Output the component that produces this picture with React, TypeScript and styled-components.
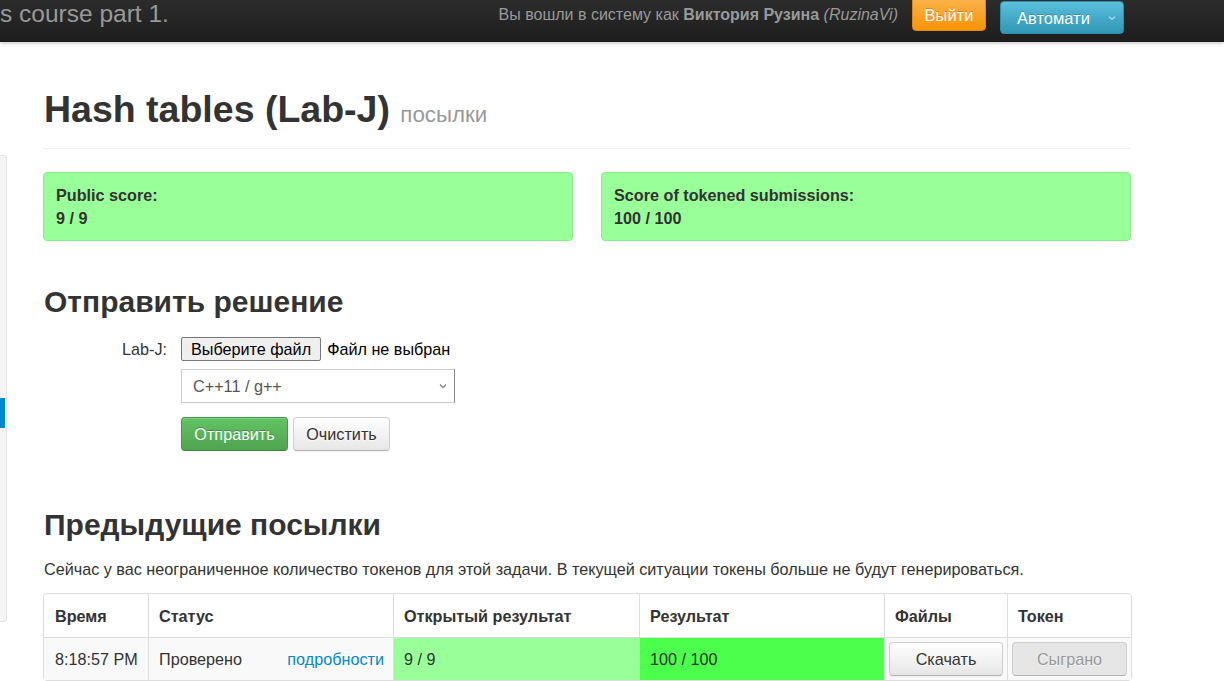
import React from "react";
import styled, { createGlobalStyle } from "styled-components";

const Global = createGlobalStyle`
  html, body { margin: 0; padding: 0; background: #fff; }
  body {
    font-family: "Liberation Sans", Arial, sans-serif;
    font-size: 16.2px;
    line-height: 20px;
    color: #333;
    overflow: hidden;
  }
  * { box-sizing: border-box; }
`;

const Navbar = styled.header`
  height: 42px;
  background: linear-gradient(#2c2c2c, #1d1d1d);
  box-shadow: 0 1px 4px rgba(0, 0, 0, 0.25);
  display: flex;
  align-items: flex-start;
  padding-right: 100px;
  position: relative;
  z-index: 2;
`;

const Brand = styled.div`
  font-size: 24.5px;
  line-height: 28px;
  color: #999;
  padding-top: 0px;
  white-space: nowrap;
`;

const UserArea = styled.div`
  margin-left: auto;
  display: flex;
  align-items: flex-start;
`;

const UserText = styled.div`
  color: #999;
  font-size: 16px;
  line-height: 20px;
  padding-top: 5px;
  white-space: nowrap;
  b { font-weight: bold; }
  i { font-style: italic; }
`;

const NavButton = styled.div<{ $tone: "orange" | "blue" }>`
  color: #fff;
  font-size: 16.5px;
  line-height: 20px;
  border-radius: 4px;
  border: 1px solid ${(p) => (p.$tone === "orange" ? "#e08a0c" : "#2f8fab")};
  background: ${(p) =>
    p.$tone === "orange"
      ? "linear-gradient(#fbb450, #f89406)"
      : "linear-gradient(#5bc0de, #2f96b4)"};
  text-shadow: 0 -1px 0 rgba(0, 0, 0, 0.2);
`;

const LogoutButton = styled(NavButton)`
  margin-left: 14px;
  margin-top: -4px;
  height: 35px;
  width: 74px;
  padding-top: 8px;
  text-align: center;
`;

const LangButton = styled(NavButton)`
  margin-left: 14px;
  margin-top: 1px;
  height: 33px;
  width: 124px;
  display: flex;
  align-items: center;
  padding-left: 16px;
  padding-right: 6px;
  overflow: hidden;
`;

const LangText = styled.span`
  width: 74px;
  overflow: hidden;
  white-space: nowrap;
`;

const Caret = styled.svg`
  margin-left: auto;
  color: rgba(255, 255, 255, 0.55);
`;

const Layout = styled.div`
  display: flex;
  align-items: flex-start;
`;

const Sidebar = styled.nav`
  margin-top: 113px;
  width: 7px;
  height: 467px;
  background: #f5f5f5;
  border: 1px solid #e3e3e3;
  border-left: none;
  border-radius: 0 4px 4px 0;
  padding-top: 242px;
  flex-shrink: 0;
`;

const SideActive = styled.div`
  height: 30px;
  width: 5px;
  background: #0088cc;
`;

const Main = styled.main`
  margin-left: 36px;
  width: 1087px;
  padding-top: 46px;
`;

const PageHeader = styled.div`
  border-bottom: 1px solid #eee;
  padding-bottom: 12px;
  padding-left: 1px;
`;

const Title = styled.h1`
  margin: 0;
  font-size: 37.5px;
  line-height: 42px;
  font-weight: bold;
  color: #333;
  small {
    font-size: 22.3px;
    font-weight: normal;
    color: #999;
  }
`;

const ScoreRow = styled.div`
  display: grid;
  grid-template-columns: 530px 530px;
  column-gap: 28px;
  margin-top: 23px;
`;

const ScoreBox = styled.div`
  height: 69px;
  background: #99ff99;
  border: 1px solid #88ee88;
  border-radius: 4px;
  padding: 11px 12px;
  font-weight: bold;
  font-size: 16.2px;
  line-height: 23px;
  color: #333;
`;

const SectionTitle = styled.h2<{ $top: number }>`
  margin: ${(p) => p.$top}px 0 0 0;
  font-size: 30px;
  line-height: 36px;
  font-weight: bold;
  color: #333;
  padding-left: 1px;
`;

const FormRow = styled.div<{ $top: number }>`
  display: flex;
  align-items: center;
  margin-top: ${(p) => p.$top}px;
`;

const Label = styled.label`
  width: 124px;
  text-align: right;
  margin-right: 14px;
  color: #333;
`;

const Controls = styled.div`
  margin-left: 138px;
`;

const FileButton = styled.div`
  height: 24px;
  padding: 1px 9px 0;
  background: #efefef;
  border: 1px solid #767676;
  border-radius: 2px;
  color: #000;
  line-height: 20px;
  white-space: nowrap;
`;

const FileNote = styled.span`
  margin-left: 6px;
  color: #000;
`;

const SelectBox = styled.div`
  width: 274px;
  height: 34px;
  border: 1px solid #ccc;
  border-right-color: #888;
  display: flex;
  align-items: center;
  padding: 0 6px 0 11px;
  color: #555;
  background: #fff;
`;

const SelectCaret = styled.svg`
  margin-left: auto;
  color: #777;
`;

const Btn = styled.div<{ $variant?: "primary" | "default" | "disabled"; $w?: number }>`
  height: 34px;
  display: inline-flex;
  align-items: center;
  justify-content: center;
  width: ${(p) => (p.$w ? `${p.$w}px` : "100%")};
  border-radius: 4px;
  font-size: 16.2px;
  white-space: nowrap;
  border: 1px solid
    ${(p) => (p.$variant === "primary" ? "#459845" : "#cfcfcf")};
  border-bottom-color: ${(p) => (p.$variant === "primary" ? "#3a863a" : "#b3b3b3")};
  background: ${(p) =>
    p.$variant === "primary"
      ? "linear-gradient(#62c462, #51a351)"
      : p.$variant === "disabled"
      ? "#e6e6e6"
      : "linear-gradient(#ffffff, #e6e6e6)"};
  color: ${(p) =>
    p.$variant === "primary" ? "#fff" : p.$variant === "disabled" ? "#999" : "#333"};
  box-shadow: ${(p) =>
    p.$variant === "disabled" ? "none" : "inset 0 1px 0 rgba(255,255,255,0.2), 0 1px 2px rgba(0,0,0,0.05)"};
  text-shadow: ${(p) => (p.$variant === "primary" ? "0 -1px 0 rgba(0,0,0,0.25)" : "0 1px 1px rgba(255,255,255,0.75)")};
`;

const ButtonRow = styled.div`
  display: flex;
  gap: 5px;
  margin-top: 14px;
  margin-left: 138px;
`;

const Note = styled.p`
  margin: 16px 0 0 0;
  padding-left: 1px;
`;

const Table = styled.table`
  margin-top: 14px;
  width: 1087px;
  border-collapse: separate;
  border-spacing: 0;
  border: 1px solid #ddd;
  border-radius: 4px;
  table-layout: fixed;
`;

const Th = styled.th<{ $w: number }>`
  width: ${(p) => p.$w}px;
  text-align: left;
  font-weight: bold;
  padding: 11px 9px 11px 10px;
  height: 43px;
  border-left: 1px solid #ddd;
  &:first-child { border-left: none; padding-left: 11px; }
`;

const Td = styled.td<{ $bg?: string; $pad?: string }>`
  padding: ${(p) => p.$pad || "11px 9px 11px 10px"};
  height: 43px;
  border-top: 1px solid #ddd;
  border-left: 1px solid #ddd;
  background: ${(p) => p.$bg || "#f9f9f9"};
  &:first-child { border-left: none; padding-left: 11px; }
`;

const StatusCell = styled.div`
  display: flex;
  justify-content: space-between;
  a { color: #0088cc; text-decoration: none; }
`;

export default function App() {
  return (
    <>
      <Global />
      <Navbar>
        <Brand>s course part 1.</Brand>
        <UserArea>
          <UserText>
            Вы вошли в систему как <b>Виктория Рузина</b> <i>(RuzinaVi)</i>
          </UserText>
          <LogoutButton $tone="orange">Выйти</LogoutButton>
          <LangButton $tone="blue">
            <LangText>Автоматически</LangText>
            <Caret width="10" height="10" viewBox="0 0 10 10">
              <path d="M2 3.5 L5 6.5 L8 3.5" fill="none" stroke="currentColor" strokeWidth="1.2" />
            </Caret>
          </LangButton>
        </UserArea>
      </Navbar>
      <Layout>
        <Sidebar>
          <SideActive />
        </Sidebar>
        <Main>
          <PageHeader>
            <Title>
              Hash tables (Lab-J) <small>посылки</small>
            </Title>
          </PageHeader>
          <ScoreRow>
            <ScoreBox>
              Public score:
              <br />9 / 9
            </ScoreBox>
            <ScoreBox>
              Score of tokened submissions:
              <br />100 / 100
            </ScoreBox>
          </ScoreRow>

          <SectionTitle $top={43}>Отправить решение</SectionTitle>
          <FormRow $top={17}>
            <Label>Lab-J:</Label>
            <FileButton>Выберите файл</FileButton>
            <FileNote>Файл не выбран</FileNote>
          </FormRow>
          <Controls>
            <FormRow $top={8}>
              <SelectBox>
                C++11 / g++
                <SelectCaret width="10" height="10" viewBox="0 0 10 10">
                  <path d="M2 3.5 L5 6.5 L8 3.5" fill="none" stroke="currentColor" strokeWidth="1.1" />
                </SelectCaret>
              </SelectBox>
            </FormRow>
          </Controls>
          <ButtonRow>
            <Btn $variant="primary" $w={107}>Отправить</Btn>
            <Btn $variant="default" $w={97}>Очистить</Btn>
          </ButtonRow>

          <SectionTitle $top={56}>Предыдущие посылки</SectionTitle>
          <Note>
            Сейчас у вас неограниченное количество токенов для этой задачи. В текущей ситуации токены
            больше не будут генерироваться.
          </Note>
          <Table>
            <thead>
              <tr>
                <Th $w={104}>Время</Th>
                <Th $w={245}>Статус</Th>
                <Th $w={246}>Открытый результат</Th>
                <Th $w={245}>Результат</Th>
                <Th $w={123}>Файлы</Th>
                <Th $w={124}>Токен</Th>
              </tr>
            </thead>
            <tbody>
              <tr>
                <Td>8:18:57 PM</Td>
                <Td>
                  <StatusCell>
                    <span>Проверено</span>
                    <a href="#">подробности</a>
                  </StatusCell>
                </Td>
                <Td $bg="#99ff99">9 / 9</Td>
                <Td $bg="#4cff4c">100 / 100</Td>
                <Td $pad="3px 4px">
                  <Btn $variant="default">Скачать</Btn>
                </Td>
                <Td $pad="3px 4px">
                  <Btn $variant="disabled">Сыграно</Btn>
                </Td>
              </tr>
            </tbody>
          </Table>
        </Main>
      </Layout>
    </>
  );
}
